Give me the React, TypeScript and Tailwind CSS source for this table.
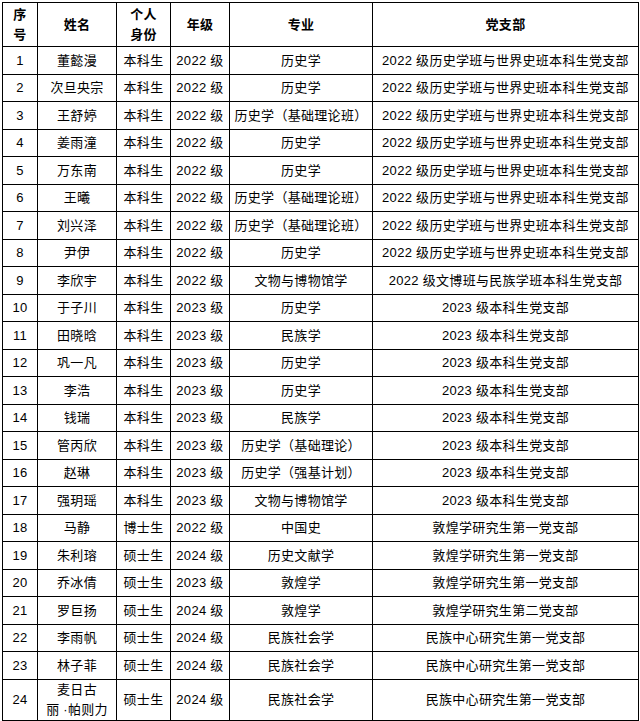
import React from 'react';

type Row = [string, string, string, string, string];

const rows: Row[] = [
  ['董懿漫', '本科生', '2022 级', '历史学', '2022 级历史学班与世界史班本科生党支部'],
  ['次旦央宗', '本科生', '2022 级', '历史学', '2022 级历史学班与世界史班本科生党支部'],
  ['王舒婷', '本科生', '2022 级', '历史学（基础理论班）', '2022 级历史学班与世界史班本科生党支部'],
  ['姜雨潼', '本科生', '2022 级', '历史学', '2022 级历史学班与世界史班本科生党支部'],
  ['万东南', '本科生', '2022 级', '历史学', '2022 级历史学班与世界史班本科生党支部'],
  ['王曦', '本科生', '2022 级', '历史学（基础理论班）', '2022 级历史学班与世界史班本科生党支部'],
  ['刘兴泽', '本科生', '2022 级', '历史学（基础理论班）', '2022 级历史学班与世界史班本科生党支部'],
  ['尹伊', '本科生', '2022 级', '历史学', '2022 级历史学班与世界史班本科生党支部'],
  ['李欣宇', '本科生', '2022 级', '文物与博物馆学', '2022 级文博班与民族学班本科生党支部'],
  ['于子川', '本科生', '2023 级', '历史学', '2023 级本科生党支部'],
  ['田晓晗', '本科生', '2023 级', '民族学', '2023 级本科生党支部'],
  ['巩一凡', '本科生', '2023 级', '历史学', '2023 级本科生党支部'],
  ['李浩', '本科生', '2023 级', '历史学', '2023 级本科生党支部'],
  ['钱瑞', '本科生', '2023 级', '民族学', '2023 级本科生党支部'],
  ['管丙欣', '本科生', '2023 级', '历史学（基础理论）', '2023 级本科生党支部'],
  ['赵琳', '本科生', '2023 级', '历史学（强基计划）', '2023 级本科生党支部'],
  ['强玥瑶', '本科生', '2023 级', '文物与博物馆学', '2023 级本科生党支部'],
  ['马静', '博士生', '2022 级', '中国史', '敦煌学研究生第一党支部'],
  ['朱利瑢', '硕士生', '2024 级', '历史文献学', '敦煌学研究生第一党支部'],
  ['乔冰倩', '硕士生', '2023 级', '敦煌学', '敦煌学研究生第一党支部'],
  ['罗巨扬', '硕士生', '2024 级', '敦煌学', '敦煌学研究生第二党支部'],
  ['李雨帆', '硕士生', '2024 级', '民族社会学', '民族中心研究生第一党支部'],
  ['林子菲', '硕士生', '2024 级', '民族社会学', '民族中心研究生第一党支部'],
];

const cell = 'border border-black text-center align-middle p-0';

export default function App() {
  return (
    <div
      className="bg-white p-[2px] text-black text-[13px] tracking-[0.3px] leading-[20px]"
      style={{ fontFamily: '"Liberation Sans", "Noto Sans CJK SC", sans-serif' }}
    >
      <table className="table-fixed border-collapse w-[636px]">
        <colgroup>
          <col className="w-[35px]" />
          <col className="w-[79px]" />
          <col className="w-[54px]" />
          <col className="w-[59px]" />
          <col className="w-[143px]" />
          <col className="w-[266px]" />
        </colgroup>
        <thead>
          <tr className="h-[44px] font-bold">
            <th className={cell}>序<br />号</th>
            <th className={cell}>姓名</th>
            <th className={cell}>个人<br />身份</th>
            <th className={cell}>年级</th>
            <th className={cell}>专业</th>
            <th className={cell}>党支部</th>
          </tr>
        </thead>
        <tbody>
          {rows.map((r, i) => (
            <tr key={i} className={i % 2 === 0 ? 'h-[28px]' : 'h-[27px]'}>
              <td className={cell}>{i + 1}</td>
              <td className={cell}>{r[0]}</td>
              <td className={cell}>{r[1]}</td>
              <td className={cell}>{r[2]}</td>
              <td className={cell}>{r[3]}</td>
              <td className={cell}>{r[4]}</td>
            </tr>
          ))}
          <tr className="h-[40px]">
            <td className={cell}>24</td>
            <td className={cell}>麦日古<br />丽 ·帕则力</td>
            <td className={cell}>硕士生</td>
            <td className={cell}>2024 级</td>
            <td className={cell}>民族社会学</td>
            <td className={cell}>民族中心研究生第一党支部</td>
          </tr>
        </tbody>
      </table>
    </div>
  );
}
